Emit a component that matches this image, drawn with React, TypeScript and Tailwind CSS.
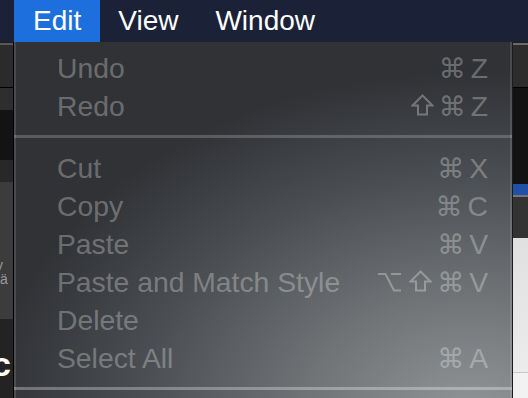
const items: { label: string; keys: string[] }[][] = [
  [
    { label: "Undo", keys: ["⌘", "Z"] },
    { label: "Redo", keys: ["⇧", "⌘", "Z"] },
  ],
  [
    { label: "Cut", keys: ["⌘", "X"] },
    { label: "Copy", keys: ["⌘", "C"] },
    { label: "Paste", keys: ["⌘", "V"] },
    { label: "Paste and Match Style", keys: ["⌥", "⇧", "⌘", "V"] },
    { label: "Delete", keys: [] },
    { label: "Select All", keys: ["⌘", "A"] },
  ],
];

function Key({ k }: { k: string }) {
  // ⌘ from DejaVu, ⇧ and ⌥ drawn, letters stay in Liberation
  if (k === "⌘")
    return <span className="mr-[5px] font-['DejaVu_Sans',sans-serif] text-[27px] leading-none">{k}</span>;
  if (k === "⇧")
    return (
      <svg className="mr-[5px] mb-[2px] h-[22px] w-[23px]" viewBox="0 0 23 22" fill="none" stroke="currentColor" strokeWidth={2} strokeLinejoin="miter">
        <path d="M11.5 1.5 L21.5 11.5 H16 V20.5 H7 V11.5 H1.5 Z" />
      </svg>
    );
  if (k === "⌥")
    return (
      <svg className="mr-[8px] mb-[1px] h-[20px] w-[23px]" viewBox="0 0 23 20" fill="none" stroke="currentColor" strokeWidth={2}>
        <path d="M0 2 H7.5 L16 18.5 H23 M13 2 H23" />
      </svg>
    );
  return <span>{k}</span>;
}

function Row({ label, keys }: { label: string; keys: string[] }) {
  return (
    <div className="flex h-[38px] items-center justify-between pl-[43px] pr-[24px] leading-[38px] text-white/30">
      <span>{label}</span>
      <span className="flex items-center">
        {keys.map((k, i) => (
          <Key key={i} k={k} />
        ))}
      </span>
    </div>
  );
}

export default function App() {
  return (
    <div className="flex h-[398px] w-[528px] flex-col overflow-hidden font-['Liberation_Sans',sans-serif] text-[28.3px]">
      {/* Menu bar */}
      <div className="flex h-[42px] shrink-0 bg-[#1b2238] pl-[14px] text-[28px] leading-[42px] text-white">
        <span className="bg-[#1d6fde] px-[19px]">Edit</span>
        <span className="px-[18px]">View</span>
        <span className="px-[19px]">Window</span>
      </div>

      <div className="flex flex-1">
        {/* left background strip */}
        <div className="flex w-[13px] flex-col">
          <div className="h-[1px] bg-[#1e1e1e]" />
          <div className="h-[2px] bg-[#585858]" />
          <div className="h-[42px] bg-[#2b2b2b]" />
          <div className="h-[1px] bg-black" />
          <div className="h-[22px] bg-[#2e2e2e]" />
          <div className="h-[50px] bg-[#131313]" />
          <div className="h-[22px] bg-[#282828]" />
          <div className="h-[137px] overflow-hidden bg-[#3c3c3c] pt-[76px] text-[14px] leading-[14px] text-[#9a9a9a]">
            <span className="-ml-[4px]">y ä</span>
          </div>
          <div className="flex-1 overflow-hidden bg-[#232323] pt-[28px] text-[34px] leading-[34px] font-bold text-white">
            <span className="-ml-[8px]">c</span>
          </div>
        </div>

        {/* Edit menu */}
        <div className="flex w-[500px] flex-col border-x border-l-black border-r-[#1a1a1a] bg-[radial-gradient(ellipse_480px_340px_at_92%_104%,#929598_0%,#707376_35%,#4a4d51_70%,#303236_100%)] shadow-[inset_2px_0_0_rgba(255,255,255,0.12),inset_-2px_0_0_rgba(255,255,255,0.12)]">
          <div className="h-[7px]" />
          {items[0].map((it) => (
            <Row key={it.label} {...it} />
          ))}
          <div className="mt-[10px] mb-[11px] h-[3px] bg-white/20" />
          {items[1].map((it) => (
            <Row key={it.label} {...it} />
          ))}
          <div className="mt-[10px] h-[3px] bg-white/30" />
          <div className="flex-1" />
        </div>

        {/* right background strip */}
        <div className="flex flex-1 flex-col">
          <div className="h-[1px] bg-[#1e1e1e]" />
          <div className="h-[2px] bg-[#6a6a6a]" />
          <div className="h-[42px] bg-[#2c2c2c]" />
          <div className="h-[1px] bg-black" />
          <div className="h-[96px] bg-[#121212]" />
          <div className="h-[11px] bg-[#2150a8]" />
          <div className="h-[2px] bg-[#777777]" />
          <div className="h-[41px] bg-[#333333]" />
          <div className="h-[134px] bg-[linear-gradient(to_bottom,#e0e0e0,#ececec)]" />
          <div className="h-[1px] bg-[#c8c8c8]" />
          <div className="flex-1 bg-[#f2f2f2]" />
        </div>
      </div>
    </div>
  );
}
